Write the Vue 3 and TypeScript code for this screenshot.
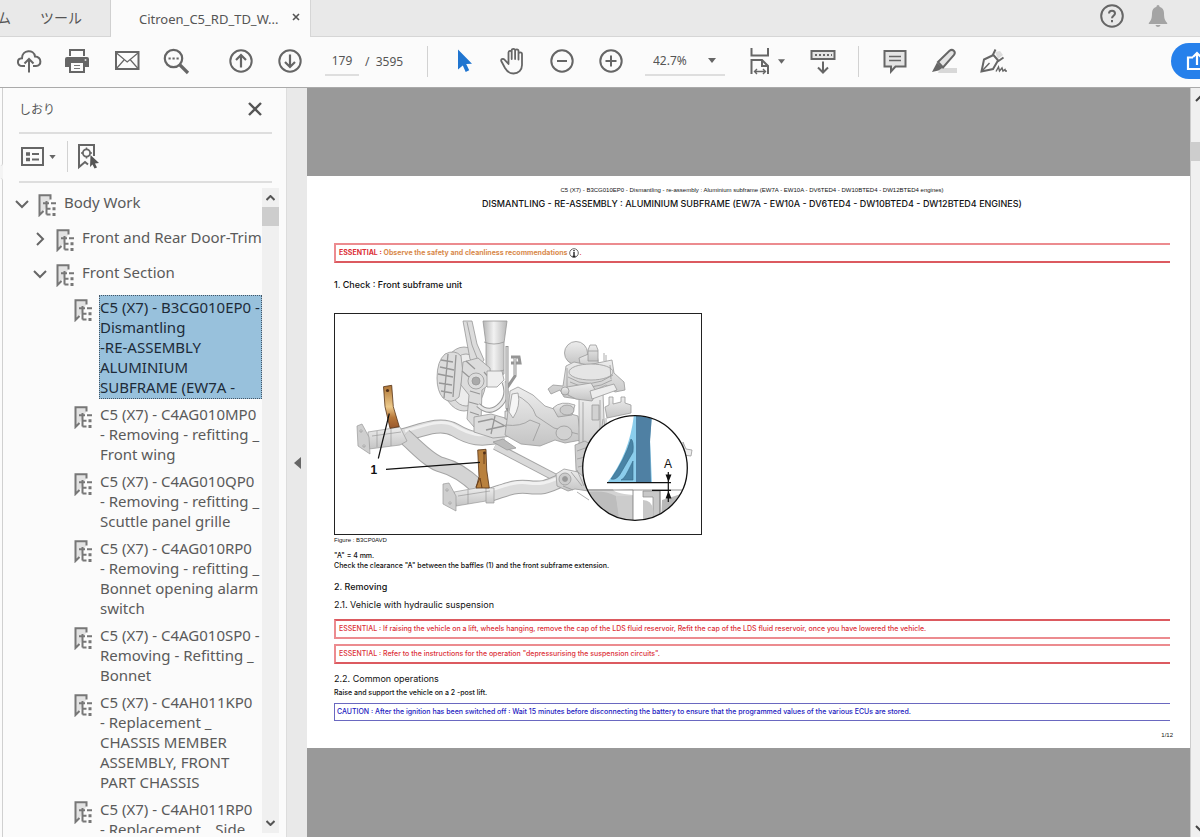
<script setup lang="ts">
import { ref } from 'vue'

interface Bookmark {
  text: string
  level: number
  state?: 'open' | 'closed'
  selected?: boolean
}

const bookmarks: Bookmark[] = [
  { text: 'Body Work', level: 0, state: 'open' },
  { text: 'Front and Rear Door-Trim', level: 1, state: 'closed' },
  { text: 'Front Section', level: 1, state: 'open' },
  { text: 'C5 (X7) - B3CG010EP0 -\nDismantling\n-RE-ASSEMBLY\nALUMINIUM\nSUBFRAME (EW7A -', level: 2, selected: true },
  { text: 'C5 (X7) - C4AG010MP0\n- Removing - refitting _\nFront wing', level: 2 },
  { text: 'C5 (X7) - C4AG010QP0\n- Removing - refitting _\nScuttle panel grille', level: 2 },
  { text: 'C5 (X7) - C4AG010RP0\n- Removing - refitting _\nBonnet opening alarm\nswitch', level: 2 },
  { text: 'C5 (X7) - C4AG010SP0 -\nRemoving - Refitting _\nBonnet', level: 2 },
  { text: 'C5 (X7) - C4AH011KP0\n- Replacement _\nCHASSIS MEMBER\nASSEMBLY, FRONT\nPART CHASSIS', level: 2 },
  { text: 'C5 (X7) - C4AH011RP0\n- Replacement _ Side', level: 2 },
]

const page = ref('179')
const zoom = ref('42.7%')
</script>

<template>
  <div class="app">
    <header class="tabs">
      <button class="tab home"><span>ホーム</span></button>
      <button class="tab tools">ツール</button>
      <div class="tab active">
        <span>Citroen_C5_RD_TD_W...</span>
        <button class="tab-close" aria-label="Close tab">
          <svg width="8" height="8" viewBox="0 0 8 8"><path d="M1 1l6 6M7 1l-6 6" stroke="#555" stroke-width="1.6" /></svg>
        </button>
      </div>
      <div class="tab-right">
        <button class="icon" aria-label="Help">
          <svg width="26" height="26" viewBox="0 0 26 26" fill="none" stroke="#666" stroke-width="2">
            <circle cx="13" cy="13" r="10.8" />
            <path d="M10 10.6c0-3.8 6-3.8 6 0 0 2.1-3 2.3-3 4.6M13 17v2.2" />
          </svg>
        </button>
        <button class="icon" aria-label="Notifications">
          <svg width="20" height="24" viewBox="0 0 20 24" fill="#a4a4a4">
            <path d="M10 1c1 0 1.5.8 1.5 1.7C14.500 3.500 16 6 16 9c0 5 .8 7.500 3.200 10v1H.8v-1C3.200 16.500 4 14 4 9c0-3 1.500-5.500 4.500-6.300C8.500 1.800 9 1 10 1zM7.500 21h5c-.5 2.500-4.500 2.500-5 0z" />
          </svg>
        </button>
      </div>
    </header>

    <nav class="toolbar" aria-label="Tools">
      <button class="icon" aria-label="Upload">
        <svg width="26" height="26" viewBox="0 0 26 26" fill="none" stroke="#666" stroke-width="2">
          <path d="M9 18H6.500C.5 18 .5 10.500 6 10.300 6 1.500 18 1 19 8.500c7 .5 7 9.500 1 9.500h-3" />
          <path d="M13 24.500V11.500M8.500 15.500L13 11l4.500 4.500" />
        </svg>
      </button>
      <button class="icon" aria-label="Print">
        <svg width="26" height="26" viewBox="0 0 26 26">
          <path d="M4 1h16v7H4z" fill="#666" /><path d="M6 3h12v6H6z" fill="#fbfbfb" />
          <path d="M2 9h20q2 0 2 2v8h-4v6H4v-6H0v-8q0-2 2-2z" fill="#666" />
          <path d="M6 15h12v8H6z" fill="#fbfbfb" />
          <path d="M9 17.500h6M9 20.500h6" stroke="#777" stroke-width="1.200" />
          <circle cx="20.500" cy="12" r="1" fill="#ddd" />
        </svg>
      </button>
      <button class="icon" aria-label="Email">
        <svg width="26" height="22" viewBox="0 0 26 22" fill="none" stroke="#666">
          <rect x="2" y="2" width="22.500" height="17" stroke-width="2" />
          <path d="M2.500 3l10.700 9L24 3M2.500 18.500l7.500-8.500M24 18.500l-7.500-8.500" stroke-width="1.200" />
        </svg>
      </button>
      <button class="icon" aria-label="Search">
        <svg width="28" height="28" viewBox="0 0 28 28" fill="none" stroke="#666">
          <circle cx="11.500" cy="11.500" r="8.700" stroke-width="2.200" />
          <path d="M18 18l8 8" stroke-width="3.200" />
          <path d="M6.500 11.500h2.200M10.500 11.500h2.200M14.500 11.500h2.200" stroke-width="2" />
        </svg>
      </button>
      <button class="icon gap16" aria-label="Previous page">
        <svg width="26" height="26" viewBox="0 0 26 26" fill="none" stroke="#666" stroke-width="2">
          <circle cx="13" cy="13" r="10.700" /><path d="M13 19.500V7.500M8 12l5-5 5 5" stroke-width="2.200" />
        </svg>
      </button>
      <button class="icon" aria-label="Next page">
        <svg width="26" height="26" viewBox="0 0 26 26" fill="none" stroke="#666" stroke-width="2">
          <circle cx="13" cy="13" r="10.700" /><path d="M13 6.500v12M8 14l5 5 5-5" stroke-width="2.200" />
        </svg>
      </button>
      <input v-model="page" class="page-input" aria-label="Page number" />
      <span class="page-total">/&nbsp; 3595</span>
      <i class="sep"></i>
      <button class="icon" aria-label="Select">
        <svg width="26" height="26" viewBox="0 0 26 26"><path d="M7 1.500l14 14.200-5.800.3 3 6.300-3.500 1.700-2.900-6.500L7 21.500z" fill="#2075d0" /></svg>
      </button>
      <button class="icon" aria-label="Pan">
        <svg width="28" height="28" viewBox="0 0 28 28" fill="none" stroke="#666" stroke-width="1.800" stroke-linejoin="round" stroke-linecap="round">
          <path d="M9.500 15V5.500c0-2.300 3.200-2.300 3.200 0V12V3.500c0-2.300 3.400-2.300 3.400 0V12V4c0-2.300 3.400-2.300 3.400 0v8.500V7c0-2.300 3.500-2.300 3.500 0V18c0 5-3.500 8.500-8.500 8.500-4 0-6.500-2-8.500-5.500L2.500 14.500c-1.300-2.300 1.500-3.500 3-1.800L9.500 17z" />
        </svg>
      </button>
      <button class="icon" aria-label="Zoom out">
        <svg width="26" height="26" viewBox="0 0 26 26" fill="none" stroke="#666" stroke-width="2">
          <circle cx="13" cy="13" r="10.700" /><path d="M8 13h10" />
        </svg>
      </button>
      <button class="icon" aria-label="Zoom in">
        <svg width="26" height="26" viewBox="0 0 26 26" fill="none" stroke="#666" stroke-width="2">
          <circle cx="13" cy="13" r="10.700" /><path d="M7.500 13h11M13 7.500v11" />
        </svg>
      </button>
      <div class="zoom-box">
        <select v-model="zoom" aria-label="Zoom level">
          <option>42.7%</option>
          <option>100%</option>
        </select>
        <svg class="caret" width="8" height="5" viewBox="0 0 8 5"><path d="M0 0h8L4 5z" fill="#666" /></svg>
      </div>
      <button class="icon fit" aria-label="Page fit">
        <svg width="22" height="28" viewBox="0 0 22 28" fill="none" stroke="#666" stroke-width="2">
          <path d="M2.500 1v7.500h16.500V1M2.500 27V13H13l6 6v8M13 13v6h6" />
          <path d="M6 24.500h10M8 22l-2.500 2.500L8 27M14 22l2.500 2.500L14 27" stroke-width="1.400" />
        </svg>
        <svg width="7" height="5" viewBox="0 0 8 5"><path d="M0 0h8L4 5z" fill="#666" /></svg>
      </button>
      <button class="icon keys" aria-label="Scroll mode">
        <svg width="26" height="26" viewBox="0 0 26 26" fill="none" stroke="#666" stroke-width="2">
          <rect x="1.500" y="3" width="23" height="8" fill="#e4e4e4" />
          <path d="M5 7h2M9 7h2M13 7h2M17 7h2M21 7h1" />
          <path d="M13 13.500v10M8 19.500l5 5 5-5" />
        </svg>
      </button>
      <i class="sep"></i>
      <button class="icon" aria-label="Comment">
        <svg width="26" height="26" viewBox="0 0 26 26" fill="#e4e4e4" stroke="#666" stroke-width="2">
          <path d="M2.500 3h21v15.500H13.500L9 23.500v-5H2.500z" /><path d="M7 8.500h12M7 12.500h12" stroke-width="1.500" />
        </svg>
      </button>
      <button class="icon" aria-label="Highlight">
        <svg width="28" height="26" viewBox="0 0 28 26">
          <path d="M10 20h17v5H8z" fill="#d8d8d8" />
          <path d="M8 14L19.500 2.800c3-2.500 7 1 4.300 4.300L13 19.500z" fill="#e4e4e4" stroke="#666" stroke-width="2" />
          <path d="M7 14.500l5.500 5.200-4 2.800-6.500 1.500z" fill="#666" />
        </svg>
      </button>
      <button class="icon" aria-label="Sign">
        <svg width="28" height="26" viewBox="0 0 28 26" fill="none" stroke="#666" stroke-width="2">
          <path d="M16 4l5-1 3 4-5 4z" fill="#ddd" stroke="none" />
          <path d="M14.500 7L5 11.500 2.500 23.500 14 21l5-8.500" /><path d="M3 23l7.500-8" stroke-width="1.400" />
          <path d="M16.500 1.500l-2.500 5 5.500 6.500 5-3.500" />
          <path d="M17 23.500l2.500-4.500 1 4 2.500-3 1 3 2-1.500.5 1.500h1.500" stroke-width="1.400" />
        </svg>
      </button>
      <button class="share" aria-label="Share">
        <svg width="14" height="20" viewBox="0 0 14 20" fill="none" stroke="#fff" stroke-width="2.200">
          <path d="M7 6.500H2V18h14M11 14V3M7 6l4-4 4 4" />
        </svg>
      </button>
    </nav>

    <main class="body">
      <div class="rail"><i class="rail-top"></i><i class="rail-rest"></i></div>
      <aside class="side">
        <div class="side-head">
          <h2>しおり</h2>
          <button class="icon close" aria-label="Close panel">
            <svg width="14" height="14" viewBox="0 0 14 14"><path d="M1 1l12 12M13 1L1 13" stroke="#555" stroke-width="2.400" /></svg>
          </button>
        </div>
        <div class="side-tools">
          <button class="icon list" aria-label="Bookmark options">
            <svg width="23" height="19" viewBox="0 0 23 19" fill="none" stroke="#666" stroke-width="2">
              <rect x="1" y="1" width="21" height="17" />
              <path d="M11 7h7M11 12.500h7" stroke-width="1.800" /><path d="M5 7h4M5 12.500h4" stroke-width="3.400" />
            </svg>
            <svg width="7" height="4" viewBox="0 0 8 5"><path d="M0 0h8L4 5z" fill="#666" /></svg>
          </button>
          <i class="sep"></i>
          <button class="icon find" aria-label="Find current bookmark">
            <svg width="24" height="28" viewBox="0 0 24 28" fill="none" stroke="#666" stroke-width="2">
              <path d="M18 13V2H3v22l6-5 3 2.500" />
              <circle cx="10.500" cy="10" r="3.600" stroke-width="1.800" />
              <path d="M10.500 4.500v2M10.500 13.500v2M5 10h2M14 10h2" stroke-width="1.500" />
              <path d="M14.500 12l8.500 8-4 .5 2 4-2.500 1-2-4-2.500 2.500z" fill="#555" stroke="none" />
            </svg>
          </button>
        </div>
        <div class="tree-wrap">
          <ul class="tree">
            <li v-for="(b, i) in bookmarks" :key="i" :class="['level' + b.level]">
              <button v-if="b.state" class="chevron" :aria-label="b.state === 'open' ? 'Collapse' : 'Expand'">
                <svg width="14" height="14" viewBox="0 0 14 14" fill="none" stroke="#666" stroke-width="2">
                  <path v-if="b.state === 'open'" d="M1 4l6 6 6-6" /><path v-else d="M4 1l6 6-6 6" />
                </svg>
              </button>
              <span v-else class="chevron"></span>
              <svg class="mark" width="18" height="23" viewBox="0 0 18 23" fill="none" stroke="#777">
                <path d="M12 6V1.200H1.500V21.500L5 18z" fill="#e2e2e2" stroke="none" />
                <path d="M12.500 5.500V1.200H1.500V21L5.500 17" stroke-width="2" />
                <path d="M8.500 7v13.500M5 9.200h6M13 9.200h5M8.500 14.800h4M8.500 20.500h4" stroke-width="2" />
                <path d="M14.500 14.800h3M14.500 20.500h3" stroke-width="3" />
              </svg>
              <a href="#" :class="{ selected: b.selected }">{{ b.text }}</a>
            </li>
          </ul>
          <div class="scroll">
            <svg width="9" height="6" viewBox="0 0 9 6" fill="none" stroke="#555" stroke-width="2"><path d="M.5 5l4-4 4 4" /></svg>
            <i class="thumb"></i>
            <svg class="down" width="9" height="6" viewBox="0 0 9 6" fill="none" stroke="#555" stroke-width="2"><path d="M.5 1l4 4 4-4" /></svg>
          </div>
        </div>
      </aside>
      <button class="splitter" aria-label="Hide panel">
        <svg width="7" height="12" viewBox="0 0 7 12"><path d="M7 0v12L0 6z" fill="#666" /></svg>
      </button>

      <section class="viewer">
        <article class="page">
          <p class="running">C5 (X7) - B3CG010EP0 - Dismantling - re-assembly : Aluminium subframe (EW7A - EW10A - DV6TED4 - DW10BTED4 - DW12BTED4 engines)</p>
          <h1>DISMANTLING - RE-ASSEMBLY : ALUMINIUM SUBFRAME (EW7A - EW10A - DV6TED4 - DW10BTED4 - DW12BTED4 ENGINES)</h1>
          <p class="box red first"><b>ESSENTIAL : </b><b class="orange">Observe the safety and cleanliness recommendations</b>
            <svg width="10" height="11" viewBox="0 0 10 11" fill="none" stroke="#666"><circle cx="5" cy="5" r="4.300" /><path d="M5 2v1.300M5 4v4.500M3.500 8.500h3" stroke="#222" stroke-width="1.400" /></svg>.</p>
          <h2 class="check">1. Check : Front subframe unit</h2>
          <figure>
            <svg width="368" height="222" viewBox="334 313 368 222" role="img" aria-label="Front subframe unit">
              <defs>
                <linearGradient id="strut" x1="0" x2="1"><stop offset="0" stop-color="#b5b5b5" /><stop offset=".45" stop-color="#f2f2f2" /><stop offset="1" stop-color="#b8b8b8" /></linearGradient>
                <linearGradient id="metal" x1="0" y1="0" x2="0" y2="1"><stop offset="0" stop-color="#ededed" /><stop offset="1" stop-color="#c4c4c4" /></linearGradient>
                <linearGradient id="bronze" x1="0" y1="0" x2="0" y2="1"><stop offset="0" stop-color="#ae7434" /><stop offset=".5" stop-color="#edca8b" /><stop offset=".75" stop-color="#b7773a" /><stop offset="1" stop-color="#98572c" /></linearGradient>
                <clipPath id="lens"><circle cx="635" cy="468" r="52" /></clipPath>
              </defs>
              <g fill="none" stroke-linecap="butt" stroke-linejoin="round">
                <path d="M495 446L560 480" stroke="#a5a5a5" stroke-width="8" /><path d="M495 446L560 480" stroke="#d9d9d9" stroke-width="6" />
                <path d="M400 436C420 431 440 421 455 430S480 441 504 436" stroke="#a3a3a3" stroke-width="14" />
                <path d="M400 436C420 431 440 421 455 430S480 441 504 436" stroke="#dadada" stroke-width="12" />
                <path d="M405 431C424 426 441 418 455 426S480 438 502 432" stroke="#f0f0f0" stroke-width="3" />
                <path d="M404 436C418 448 430 462 442 465S464 474 478 487" stroke="#a5a5a5" stroke-width="16" />
                <path d="M404 436C418 448 430 462 442 465S464 474 478 487" stroke="#d4d4d4" stroke-width="14" />
                <path d="M486 496C502 492 512 485 528 487S548 486 560 481" stroke="#a3a3a3" stroke-width="14" />
                <path d="M486 496C502 492 512 485 528 487S548 486 560 481" stroke="#dcdcdc" stroke-width="12" />
                <path d="M490 490C502 487 514 481 528 483S548 482 558 478" stroke="#f1f1f1" stroke-width="3" />
              </g>
              <g fill="url(#metal)" stroke="#999" stroke-width=".7">
                <path d="M368 432l32-5 7 14-7 4-31 4z" /><path d="M372 436l29-4M377 431v16M391 429v17" fill="none" />
                <path d="M357 426l5-2 7 13 1 17-12-8z" fill="#cfcfcf" /><circle cx="361" cy="431" r="1.200" /><circle cx="364" cy="446" r="1.200" />
                <path d="M454 492l28-5 11 3-1 10-36 6z" /><path d="M458 496l32-5M468 490v14M486 488h8v15h-8z" />
                <path d="M443 484l6-1 7 13v15l-13-7z" fill="#cfcfcf" /><circle cx="447" cy="490" r="1.200" /><circle cx="450" cy="503" r="1.200" />
              </g>
              <g fill="#dcdcdc" stroke="#979797" stroke-width=".8">
                <ellipse cx="464" cy="379" rx="22" ry="32" /><ellipse cx="466" cy="380" rx="17" ry="26" fill="#ececec" />
                <path d="M445 354q10-5 16 2l2 17-4 24q-8 8-16 1-6-7-6-20 0-17 8-24z" />
                <path d="M441 360l12 2M440 367l14 3M438 374l15 3M439 383l13 2M441 391l11 2M448 354l-4 44M456 355l-3 42" fill="none" stroke-width="1.300" />
                <path d="M463 321h9l5 23 7 16-6 8-8-9-3-16z" /><path d="M467 322l5 23 7 18" fill="none" />
                <path d="M483 321h24l-3 22v31q-9 6-18 0v-30z" fill="url(#strut)" /><path d="M484 342q10 4 20 0M486 370q9 4 18 0" fill="none" />
                <path d="M463 362l15-4 12 10 1 15-9 7-1 32-7 5-7-8 2-24-8-10z" /><circle cx="476" cy="381" r="8" /><circle cx="476" cy="381" r="4" fill="#aaa" />
                <path d="M466 361l9 8M462 371l7 6M470 391l10 3M469 402l11 3M470 412l9 3M484 372l7 8" fill="none" stroke-width="1.200" />
                <path d="M487 371h15l2 9-7 7h-10z" fill="#eee" />
                <path d="M478 405q12 11 23-1 8-9 3-22" fill="none" stroke="#999" stroke-width="5" /><path d="M478 405q12 11 23-1 8-9 3-22" fill="none" stroke="#e8e8e8" stroke-width="3" />
                <path d="M474 417l17-3 14 4 12 10-4 8-20 2-19-6z" /><path d="M478 422l14-3 15 8M486 430l18-4M495 416l-4 18" fill="none" stroke-width="1.300" />
              </g>
              <path d="M507 346v62l4 9M507 388l8-12v-19M511 357h8l1 6h-9" fill="none" stroke="#959595" stroke-width="3" /><path d="M507 347v61M515 375v-17" stroke="#ececec" />
              <path d="M505 411h8v8h-8z" fill="#ddd" stroke="#888" stroke-width=".7" />
              <g fill="url(#metal)" stroke="#999" stroke-width=".8">
                <path d="M510 391l8-4 15 8 12 11 12 4 21 6 3 24-16 3-10-3-15 6-19-2-16-9 2-15z" />
                <path d="M514 394q18 8 22 22l18 12 24 6M505 425q16 2 25-5l10 4-7 17" fill="none" />
                <path d="M518 393q3 13-5 25l-4-6 3-18z" fill="#f5f5f5" />
                <path d="M553 408q8-8 22-3l-3 10-14 2z" /><ellipse cx="567" cy="410" rx="7" ry="5" fill="#ccc" /><ellipse cx="564" cy="433" rx="8" ry="7" fill="#d2d2d2" />
                <path d="M493 442l10-3 13 9-9 2z" fill="#bbb" />
                <path d="M579 398l24-4 1 24 3 38-15 10-13-20z" /><path d="M583 402v40M600 400v40M592 405h7v15h-7z" fill="#d2d2d2" />
                <path d="M605 407l4-2v-8h4v7l8-2v-5h4v6l6 2v8l-24 5z" />
                <path d="M575 445l10-4 8 5-2 46-13-5-2-18z" fill="#ccc" /><path d="M577 451l11-4M577 459l12-3M578 467l12-3M578 476l12-2" fill="none" />
                <path d="M556 474l8-5 14 3 9 8 8 12-20-3-7 2-11-5z" /><circle cx="565" cy="479" r="6" fill="#ccc" /><circle cx="565" cy="479" r="2.500" fill="#999" /><path d="M571 472l11 14M577 470l7 16" fill="none" />
                <circle cx="576" cy="353" r="11.500" /><path d="M579 358l12-5 6 2 2 11-18 3z" /><path d="M588 350l2-5h6l2 5v11h-10z" /><path d="M588 351h10M604 361v-8M606 364v-9" fill="none" />
                <path d="M563 386l3-20 8-4 14 3 24-5 2 13 10 9 1 8-10 2-9-7-28 14-14-2-4-7-9 4-3-5 5-4z" />
                <ellipse cx="591" cy="372" rx="22" ry="8" fill="#e5e5e5" /><path d="M568 377q22 14 45-2M570 382q20 11 42-2M567 368v21M610 365l1 14" fill="none" />
                <path d="M567 387l24-4 6 10-5 8-16-2-8-4z" /><path d="M590 391l24-7 3 6-25 9z" fill="#ededed" /><circle cx="565" cy="391" r="4" />
                <path d="M683 442l3 7 6 1-1 6-8-1z" fill="#ededed" /><path d="M603 419l-2 15M606 418v12M577 492l12 8M563 486l10 4" fill="none" />
              </g>
              <path d="M383.500 386.700l8.200-1.400 1.600 21.400 6 20-9.300 1.600-5-21.600z" fill="url(#bronze)" stroke="#553217" stroke-width=".8" /><circle cx="387.500" cy="390.500" r="1.600" fill="#51301a" />
              <path d="M477.700 450l8.300-.7.7 20.700 2.600 18H476l3-11.300z" fill="#b9813e" stroke="#553217" stroke-width=".8" /><path d="M476 487l4-9 2 10M484 452v12" fill="none" stroke="#6e421c" /><circle cx="484.500" cy="453" r="1.400" fill="#51301a" />
              <path d="M389.300 413.500l-11 45M386 469.300l94-7" stroke="#111" stroke-width="1.200" />
              <text x="370.500" y="474" class="fig-label bold">1</text>
              <circle cx="635" cy="468" r="52" fill="#fff" />
              <g clip-path="url(#lens)">
                <path d="M588 489l-7 12 25 18h20l7 4v-28q-20-2-20-6l20 1v-1z" fill="#d3d3d3" /><path d="M584 493q18-4 32 3l4 24h-28z" fill="#bdbdbd" /><path d="M616 496h17v30h-13z" fill="#ccc" />
                <path d="M643 491h17v30h-7v-24h-10z" fill="#c8c8c8" stroke="#888" stroke-width=".7" /><path d="M643 500q13 0 10 22h-10z" fill="#c8c8c8" /><path d="M662 500q14-4 27-9v26l-28 4z" fill="#b8b8b8" />
                <path d="M583 490h100M633 490v32M660 490v30" stroke="#777" stroke-width=".8" fill="none" />
                <path d="M634 414h18l-2 25 2 44h-45q23-30 27-69z" fill="#8bcdec" />
                <path d="M636 414h16l-2 28 1 40h-15z" fill="#4f80a3" />
                <path d="M631 439q3 2 2 13l-11 19q-5 10-11 8 14-20 20-40zM633 461v19h-12q3-1 7-9z" fill="#4984a6" stroke="#356986" stroke-width=".6" />
              </g>
              <circle cx="635" cy="468" r="52.300" fill="none" stroke="#111" stroke-width="1.300" />
              <path d="M607 482.700h64M652 490.300h19M668.300 472v30" stroke="#111" stroke-width="1.200" /><path d="M665.500 474.500h6l-3 7.500zM665.500 498.500h6l-3-7.500z" fill="#111" />
              <text x="664" y="468" class="fig-label">A</text>
            </svg>
            <figcaption>Figure : B3CP0AVD</figcaption>
          </figure>
          <p class="measure">"A" = 4 mm.</p>
          <p>Check the clearance "A" between the baffles (1) and the front subframe extension.</p>
          <h2 class="removing">2. Removing</h2>
          <h2>2.1. Vehicle with hydraulic suspension</h2>
          <p class="box red"><span>ESSENTIAL : If raising the vehicle on a lift, wheels hanging, remove the cap of the LDS fluid reservoir, Refit the cap of the LDS fluid reservoir, once you have lowered the vehicle.</span></p>
          <p class="box red alt"><span>ESSENTIAL : Refer to the instructions for the operation "depressurising the suspension circuits".</span></p>
          <h2 class="common">2.2. Common operations</h2>
          <p>Raise and support the vehicle on a 2 -post lift.</p>
          <p class="box blue">CAUTION : After the ignition has been switched off : Wait 15 minutes before disconnecting the battery to ensure that the programmed values of the various ECUs are stored.</p>
          <p class="folio">1/12</p>
        </article>
      </section>
      <div class="page-scroll">
        <svg width="12" height="7" viewBox="0 0 12 7" fill="none" stroke="#444" stroke-width="2"><path d="M1 6l5-5 5 5" /></svg>
        <i></i>
        <svg class="down" width="12" height="7" viewBox="0 0 12 7" fill="none" stroke="#444" stroke-width="2"><path d="M1 1l5 5 5-5" /></svg>
      </div>
    </main>
  </div>
</template>

<style>
body { margin: 0; }
</style>

<style scoped>
* { box-sizing: border-box; }
.app { display: flex; flex-direction: column; height: 100vh; overflow: hidden; background: #fbfbfb; color: #555; font-family: "Noto Sans", "Noto Sans CJK JP", sans-serif; }
button { display: flex; align-items: center; justify-content: center; margin: 0; padding: 0; border: 0; background: none; color: inherit; font: inherit; }
svg { flex: none; display: block; }
h1, h2, p, figure, ul { margin: 0; padding: 0; font-weight: normal; }

.tabs { display: flex; flex: none; height: 37px; background: #e9e9e9; }
.tab { height: 37px; padding-bottom: 3px; border-bottom: 1px solid #d6d6d6; font-size: 14px; }
.home { width: 26px; padding-right: 15px; justify-content: flex-end; overflow: hidden; }
.home span { white-space: nowrap; }
.tools { width: 85px; padding-right: 14px; border-right: 1px solid #d0d0d0; }
.active { display: flex; align-items: center; width: 200px; padding: 0 10px 0 28px; justify-content: space-between; background: #fbfbfb; border-bottom: 0; border-right: 1px solid #d6d6d6; font-size: 13px; white-space: nowrap; }
.tab-close { width: 8px; height: 12px; padding-bottom: 4px; }
.tab-right { display: flex; flex: 1; justify-content: flex-end; align-items: center; gap: 23px; padding: 0 32px 4px 0; border-bottom: 1px solid #d6d6d6; }
.tab-right .icon { width: auto; }

.toolbar { display: flex; flex: none; align-items: center; height: 51px; padding: 0 0 2px 4px; border-bottom: 1px solid #aaa; }
.icon { flex: none; width: 49px; height: 32px; }
.gap16 { margin-left: 16px; }
.page-input { width: 34px; height: 30px; margin: 0 6px 0 11px; padding: 0; border: 0; border-bottom: 2px solid #dedede; background: none; color: #555; font: inherit; font-size: 12px; text-align: center; }
.page-total { width: 62px; font-size: 12px; white-space: pre; }
.sep { flex: none; width: 1px; height: 31px; background: #d2d2d2; }
.page-total + .sep { margin-right: 11px; }
.zoom-box { display: flex; align-items: center; position: relative; flex: none; width: 80px; margin: 0 24px 0 10px; border-bottom: 2px solid #dedede; }
.zoom-box select { width: 80px; height: 28px; padding: 0 0 0 8px; border: 0; appearance: none; background: none; color: #555; font: inherit; font-size: 12px; }
.caret { position: absolute; right: 9px; pointer-events: none; }
.fit { width: 36px; gap: 7px; }
.keys { margin: 0 11px 0 13px; }
.keys + .sep { margin-right: 11px; }
.share { width: 29px; height: 36px; margin-left: auto; padding-left: 15px; border-radius: 18px 0 0 18px; background: #2680eb; }

.body { display: flex; flex: 1; min-height: 0; }
.rail { display: flex; flex: none; flex-direction: column; width: 3px; gap: 12px; background: #f4f4f4; }
.rail i { border-right: 1px solid #d0d0d0; background: #fbfbfb; }
.rail-top { height: 78px; border-bottom-right-radius: 3px; }
.rail-rest { flex: 1; border-top-right-radius: 3px; }
.side { display: flex; flex: none; flex-direction: column; width: 284px; padding: 0 7px 4px 0; border-right: 1px solid #ddd; }
.side-head { display: flex; flex: none; align-items: center; justify-content: space-between; height: 46px; margin: 0 7px 0 16px; padding: 0 9px 3px 0; border-bottom: 2px solid #dedede; }
.side-head h2 { font-size: 12px; }
.close { width: 16px; }
.side-tools { display: flex; flex: none; align-items: center; height: 49px; margin: 0 7px 0 16px; padding-bottom: 2px; border-bottom: 2px solid #dedede; }
.list { width: 38px; gap: 5px; }
.side-tools .sep { margin: 0 8px 0 10px; }
.find { width: 24px; }
.tree-wrap { display: flex; flex: 1; min-height: 0; padding-top: 5px; }
.tree { display: flex; flex: 1; flex-direction: column; gap: 3px; min-width: 0; padding: 2px 0 0 11px; overflow: hidden; list-style: none; font-size: 15px; line-height: 20px; }
.tree li { display: flex; flex: none; align-items: flex-start; min-height: 32px; }
.level1 { padding-left: 18px; }
.level2 { padding-left: 36px; }
.chevron { flex: none; width: 16px; height: 28px; margin-right: 8px; }
.mark { margin: 4px 7px 0 0; }
.tree a { padding: 1px 0; border: 1px solid transparent; color: #5a5a5a; text-decoration: none; white-space: pre; }
.tree a.selected { width: 163px; border: 1px dotted #456; background: #98c1dc; color: #1d2b38; }
.scroll { display: flex; flex: none; flex-direction: column; align-items: center; width: 17px; padding: 7px 0; background: #f0f0f0; }
.thumb { width: 17px; height: 19px; margin-top: 6px; background: #cdcdcd; }
.down { margin-top: auto; }
.splitter { flex: none; width: 20px; background: #e9e9e9; }

.viewer { flex: 1; min-width: 0; padding-top: 88px; overflow: hidden; background: #999; font-family: Inter, "Liberation Sans", Arial, sans-serif; }
.page { padding: 8px 20px 8px 27px; background: #fff; color: #111; font-size: 7px; line-height: 10px; }
.page p { font-weight: 500; }
.page h1, .page h2 { font-size: 9px; line-height: 12px; }
.page h1 { margin-top: 2px; font-weight: 500; text-align: center; }
.running, figcaption, .folio, .fig-label { font-family: "Liberation Sans", Arial, sans-serif; }
.running { font-size: 6px; text-align: center; line-height: 12px; }
.box { display: flex; align-items: center; height: 20px; padding: 0 3px; border: 2px solid #ec8b8f; border-right: 0; white-space: pre; }
.red { color: #dc3038; border-top-color: #dc5a60; }
.red.first, .red.alt { border-top-color: #ec8b8f; border-bottom-color: #dc5a60; }
.first { margin-top: 33px; }
.first b { font-weight: 700; }
.first svg { margin-left: 2px; }
.orange { color: #d98a4c; }
.page .check { margin-top: 16px; font-weight: 500; }
figure { margin-top: 22px; }
figure > svg { outline: 1px solid #222; outline-offset: -1px; }
figcaption { font-size: 6px; line-height: 10px; }
.fig-label { font-size: 12px; fill: #111; }
.bold { font-weight: bold; }
.measure { margin-top: 6px; }
.page .removing { margin: 10px 0 6px; font-weight: 500; }
h2 + .box { margin-top: 8px; }
.alt { margin-top: 5px; }
.common { margin: 9px 0 3px; }
.blue { height: 18px; margin-top: 5px; padding: 0 2px; border: 1px solid #6a68c0; border-right: 0; color: #2220c0; }
.folio { margin: 9px -3px 0 0; font-size: 6px; text-align: right; }
.page-scroll { display: flex; flex: none; flex-direction: column; align-items: flex-start; width: 10px; padding: 7px 0 5px 4px; overflow: hidden; background: #f0f0f0; border-left: 1px solid #ccc; }
.page-scroll i { width: 10px; height: 19px; margin: 40px 0 0 -4px; background: #cdcdcd; }
</style>
